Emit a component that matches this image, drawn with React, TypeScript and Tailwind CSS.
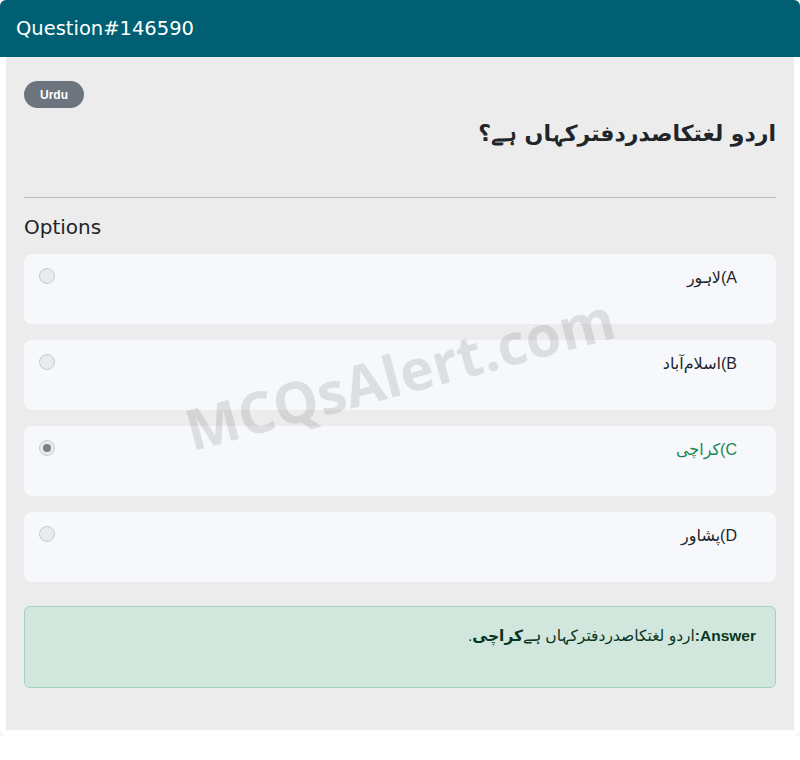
import React from "react";

const options = [
  { key: "A", text: "A)لاہور", checked: false },
  { key: "B", text: "B)اسلام‌آباد", checked: false },
  { key: "C", text: "C)کراچی", checked: true },
  { key: "D", text: "D)پشاور", checked: false },
];

function Radio({ checked }: { checked: boolean }) {
  return (
    <div className="w-4 h-4 rounded-full border border-[#c9cbcf] bg-[#e9eaec] flex items-center justify-center shrink-0">
      {checked && <div className="w-2 h-2 rounded-full bg-[#7d8085]" />}
    </div>
  );
}

export default function App() {
  return (
    <div className="w-[800px] bg-white">
      <div className="rounded-md overflow-hidden shadow-[0_1px_3px_rgba(0,0,0,0.12)]">
        <div className="h-[57px] bg-[#005f73] flex items-center pl-4">
          <span className="text-white text-[19.5px] font-['DejaVu_Sans',sans-serif]">
            Question#146590
          </span>
        </div>
        <div className="bg-white px-[6px] pb-[6px]">
          <div className="relative bg-[#ececec] px-[18px] pt-[24px] pb-[42px]">
            <div className="flex">
              <span className="h-[27px] w-[60px] justify-center rounded-full bg-[#6c757d] text-white text-[12px] font-bold font-['Liberation_Sans',sans-serif] flex items-center">
                Urdu
              </span>
            </div>
            <h2
              dir="rtl"
              className="mt-[10px] text-[22px] leading-[32px] font-bold text-[#212529] font-['DejaVu_Sans',sans-serif]"
            >
              اردو لغتکاصدردفترکہاں ہے؟
            </h2>
            <div className="mt-[47px] h-px bg-[#bdbdbd]" />
            <div className="mt-[15px] text-[20px] leading-[28px] text-[#212529] font-['DejaVu_Sans',sans-serif]">
              Options
            </div>
            <div className="mt-[13px] flex flex-col gap-4">
              {options.map((o) => (
                <div
                  key={o.key}
                  className="h-[70px] rounded-lg bg-[#f7f8fc] flex items-start pl-[15px] pr-[39px] pt-[14px]"
                >
                  <Radio checked={o.checked} />
                  <div
                    dir="rtl"
                    className={
                      "flex-1 text-[16px] leading-[20px] font-['Liberation_Sans','DejaVu_Sans',sans-serif] " +
                      (o.checked ? "text-[#198754]" : "text-[#212529]")
                    }
                  >
                    {o.text}
                  </div>
                </div>
              ))}
            </div>
            <div className="mt-[24px] h-[82px] rounded-md bg-[#d1e7dd] border border-[#a3cfbb] pt-[18px] pr-[19px]">
              <p
                dir="rtl"
                className="text-[15.5px] leading-[22px] text-[#0a3622] font-['Liberation_Sans','DejaVu_Sans',sans-serif]"
              >
                <b>Answer:</b>اردو لغتکاصدردفترکہاں ہے<b>کراچی</b>.
              </p>
            </div>
            <div className="pointer-events-none absolute left-0 right-0 top-[274px] flex justify-center">
              <span className="-rotate-[15deg] text-[57px] font-bold text-[rgba(0,0,0,0.1)] font-['Open_Sans',sans-serif] whitespace-nowrap">
                MCQsAlert.com
              </span>
            </div>
          </div>
        </div>
      </div>
    </div>
  );
}
